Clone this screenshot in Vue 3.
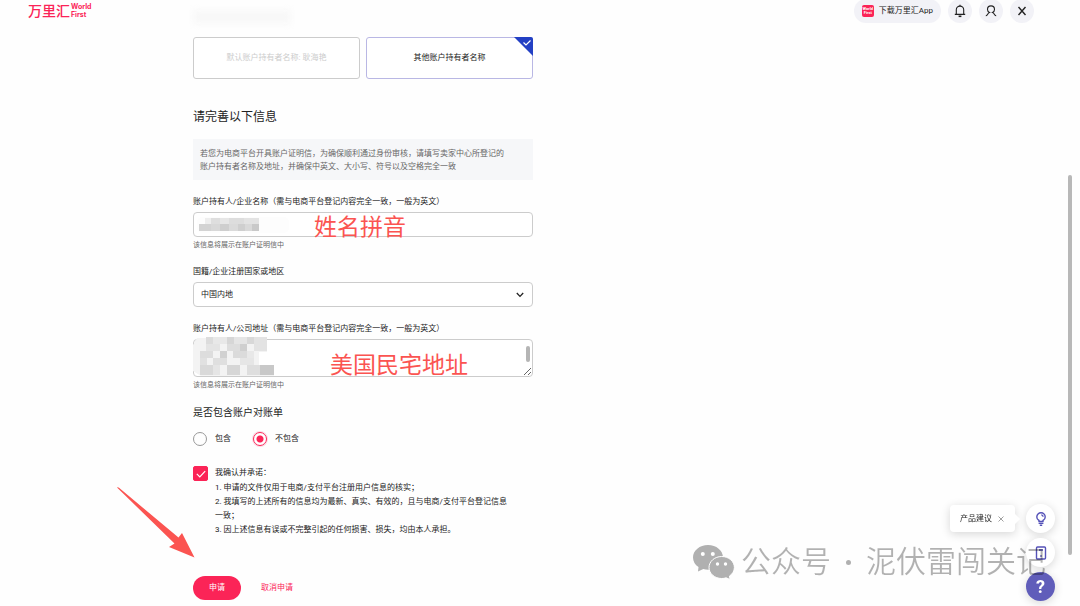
<template>
  <div class="page">
    <!-- Header -->
    <header class="header">
      <a class="logo" href="#">
        <span class="logo-cn">万里汇</span>
        <span class="logo-en">World<br />First</span>
      </a>
      <nav class="header-actions">
        <button class="app-button" type="button">
          <span class="app-icon">World<br />First</span>
          下载万里汇App
        </button>
        <button class="icon-button" type="button" aria-label="通知">
          <svg width="12" height="14" viewBox="0 0 12 14" fill="none" stroke="currentColor" stroke-width="1.1">
            <path d="M2.3 10.2V5.8a3.7 3.7 0 0 1 7.4 0v4.4M.8 10.4h10.4" />
            <path d="M4.6 12.3h2.8" stroke-width="1.6" />
            <path d="M6 .8v1.4" />
          </svg>
        </button>
        <button class="icon-button" type="button" aria-label="账户">
          <svg width="12" height="12" viewBox="0 0 12 12" fill="none" stroke="currentColor" stroke-width="1.1">
            <path d="M.8 10.800c1.800 0 1.500-2.600 3.700-3.300C3.200 6.800 2.500 5.700 2.500 4.400a3.500 3.500 0 0 1 7 0c0 1.300-.7 2.400-2 3.100 2.200.7 1.900 3.300 3.700 3.300" />
          </svg>
        </button>
        <button class="icon-button" type="button" aria-label="关闭">
          <svg width="10" height="10" viewBox="0 0 10 10" fill="none" stroke="currentColor" stroke-width="1.4">
            <path d="M1.500 1l7 8M8.500 1l-7 8" />
          </svg>
        </button>
      </nav>
    </header>

    <!-- Form -->
    <form class="form" @submit.prevent>
      <div class="masked-title"></div>

      <div class="holder-cards">
        <button class="holder-card disabled" type="button" disabled>默认账户持有者名称: 耿海艳</button>
        <button class="holder-card selected" type="button">
          其他账户持有者名称
          <svg class="corner" width="19" height="19" viewBox="0 0 19 19">
            <path d="M0 0h17a2 2 0 0 1 2 2v17z" fill="#2340c4" />
            <path d="M9.500 5.500l2.500 2.500 4.500-4.500" fill="none" stroke="#fff" stroke-width="1.200" />
          </svg>
        </button>
      </div>

      <h2 class="title">请完善以下信息</h2>
      <p class="notice">
        若您为电商平台开具账户证明信，为确保顺利通过身份审核，请填写卖家中心所登记的<br />
        账户持有者名称及地址，并确保中英文、大小写、符号以及空格完全一致
      </p>

      <div class="field">
        <label for="holder">账户持有人/企业名称（需与电商平台登记内容完全一致，一般为英文）</label>
        <div class="control">
          <input id="holder" v-model="holder" class="box" type="text" />
          <svg class="mosaic mosaic-name" width="92" height="18" viewBox="0 0 92 18">
            <rect x="0" y="1" width="92" height="16" rx="5" fill="#fdfdfd" />
            <rect v-for="(b, i) in nameBlocks" :key="i" :x="b[0]" :y="b[1]" :width="b[2]" :height="b[3]" :fill="b[4]" />
          </svg>
          <span class="mark mark-name">姓名拼音</span>
        </div>
        <p class="hint">该信息将展示在账户证明信中</p>
      </div>

      <div class="field">
        <label for="region">国籍/企业注册国家或地区</label>
        <div class="control">
          <select id="region" v-model="region" class="box select">
            <option value="CN">中国内地</option>
          </select>
          <svg class="chevron" width="8" height="6" viewBox="0 0 8 6" fill="none" stroke="#222" stroke-width="1.300">
            <path d="M.8 1L4 4.400 7.200 1" />
          </svg>
        </div>
      </div>

      <div class="field">
        <label for="address">账户持有人/公司地址（需与电商平台登记内容完全一致，一般为英文）</label>
        <div class="control">
          <textarea id="address" v-model="address" class="box textarea"></textarea>
          <svg class="mosaic mosaic-address" width="82" height="40" viewBox="0 0 82 40">
            <path d="M4 1h70v14h-8v13h15v11H8L0 34V8z" fill="#f3f3f3" />
            <rect v-for="(b, i) in addressBlocks" :key="i" :x="b[0]" :y="b[1]" :width="b[2]" :height="b[3]" :fill="b[4]" />
          </svg>
          <span class="thumb"></span>
          <span class="mark mark-address">美国民宅地址</span>
        </div>
        <p class="hint">该信息将展示在账户证明信中</p>
      </div>

      <fieldset class="statement">
        <legend>是否包含账户对账单</legend>
        <div class="radios">
          <label class="radio"><input v-model="statement" type="radio" name="statement" value="yes" />包含</label>
          <label class="radio"><input v-model="statement" type="radio" name="statement" value="no" />不包含</label>
        </div>
      </fieldset>

      <div class="agreement">
        <span class="check">
          <input id="agree" v-model="agreed" type="checkbox" />
          <svg v-if="agreed" width="10" height="8" viewBox="0 0 10 8" fill="none" stroke="#fff" stroke-width="1.200">
            <path d="M.8 3.800l3 3L9.200 1.200" />
          </svg>
        </span>
        <label class="terms" for="agree">
          <span class="terms-head">我确认并承诺：</span>
          <span>1. 申请的文件仅用于电商/支付平台注册用户信息的核实；</span>
          <span>2. 我填写的上述所有的信息均为最新、真实、有效的，且与电商/支付平台登记信息<br />一致；</span>
          <span>3. 因上述信息有误或不完整引起的任何损害、损失，均由本人承担。</span>
        </label>
      </div>

      <div class="actions">
        <button class="submit" type="submit">申请</button>
        <button class="cancel" type="button">取消申请</button>
      </div>
    </form>

    <!-- Arrow pointing at the submit button -->
    <svg class="arrow" width="78" height="71" viewBox="0 0 78 71">
      <path d="M0 .5Q1 0 2 .8L61.500 50.500 65 46 77.500 70.500 52 60 57.500 56.500z" fill="#fb5451" />
    </svg>

    <!-- Floating tools -->
    <aside class="tools">
      <div class="tool-row">
        <div class="tip">
          产品建议
          <button class="tip-close" type="button" aria-label="关闭">
            <svg width="6" height="6" viewBox="0 0 6 6" stroke="#888" stroke-width=".8">
              <path d="M.5.5l5 5M5.500.5l-5 5" />
            </svg>
          </button>
        </div>
        <button class="tool" type="button" aria-label="产品建议">
          <svg width="12" height="14" viewBox="0 0 12 14" fill="none" stroke="currentColor" stroke-width="1.400">
            <path d="M4 9.400V8.500C2.600 7.800 1.800 6.600 1.800 5a4.200 4.200 0 0 1 8.400 0c0 1.600-.8 2.800-2.200 3.500v.9z" />
            <path d="M6.200 2.900a2 2 0 0 1 1.900 1.900M3.600 11.300h4.800M4.800 13.200h2.400" />
          </svg>
        </button>
      </div>
      <button class="tool" type="button" aria-label="文档">
        <svg width="12" height="14" viewBox="0 0 12 14" fill="none" stroke="currentColor" stroke-width="1.400">
          <rect x="1.500" y="1" width="9" height="12" rx="1" />
          <path d="M4 4h4M5.200 10h1.600" />
        </svg>
      </button>
      <button class="tool help" type="button" aria-label="帮助">?</button>
    </aside>

    <!-- Watermark -->
    <div class="watermark">
      <svg width="42" height="36" viewBox="0 0 42 36">
        <path d="M15 1C6.700 1 0 6.500 0 13.500c0 4 2.100 7.300 5.500 9.600L5 27.500l5.300-2.500c1.500.4 3.100.7 4.700.7C23.300 25.700 30 20.500 30 13.500S23.300 1 15 1z" fill="#b0b0b0" />
        <path d="M28.700 12.500c-7 0-12.700 4.900-12.700 11s5.700 11 12.700 11c1.600 0 3-.2 4.400-.7L37 35.500l-.5-3.500c3-2 4.900-5 4.900-8.500 0-6.100-5.700-11-12.700-11z" fill="#b0b0b0" stroke="#fff" />
        <g fill="#fff">
          <circle cx="9.800" cy="10" r="2" />
          <circle cx="19.800" cy="10" r="2" />
          <circle cx="24.500" cy="20" r="1.700" />
          <circle cx="32.500" cy="20" r="1.700" />
        </g>
      </svg>
      <span>公众号</span>
      <span class="dot"></span>
      <span>泥伏雷闯关记</span>
    </div>

    <div class="scrollbar"></div>
  </div>
</template>

<script setup>
import { ref } from 'vue';

const holder = ref('');
const region = ref('CN');
const address = ref('');
const statement = ref('no');
const agreed = ref(true);

// x, y, width, height, fill
const nameBlocks = [
  [8, 2, 6, 6, '#eeeeee'],
  [14, 2, 9, 6, '#dedede'],
  [23, 2, 9, 6, '#e6e6e6'],
  [32, 2, 15, 6, '#dddddd'],
  [47, 2, 15, 6, '#e3e3e3'],
  [2, 8, 12, 7, '#d3d3d3'],
  [14, 8, 9, 7, '#d8d8d8'],
  [23, 8, 9, 7, '#cecece'],
  [32, 8, 9, 7, '#dadada'],
  [41, 8, 7, 7, '#cfcfcf'],
  [48, 8, 7, 7, '#d9d9d9'],
  [55, 8, 7, 7, '#c9c9c9']
];

const addressBlocks = [
  [13, 0, 7, 7, '#dcdcdc'],
  [20, 0, 14, 7, '#e8e8e8'],
  [34, 0, 7, 7, '#d6d6d6'],
  [41, 0, 13, 7, '#e5e5e5'],
  [54, 0, 7, 7, '#d8d8d8'],
  [61, 0, 13, 14, '#e3e3e3'],
  [13, 7, 14, 7, '#e4e4e4'],
  [34, 7, 13, 7, '#dddddd'],
  [47, 7, 7, 7, '#cfcfcf'],
  [7, 14, 13, 7, '#dddddd'],
  [27, 14, 7, 7, '#d1d1d1'],
  [40, 14, 14, 7, '#dbdbdb'],
  [54, 14, 7, 7, '#e8e8e8'],
  [7, 21, 7, 7, '#e1e1e1'],
  [20, 21, 14, 7, '#dfdfdf'],
  [47, 21, 14, 7, '#e6e6e6'],
  [7, 28, 13, 10, '#d9d9d9'],
  [20, 28, 7, 10, '#e5e5e5'],
  [34, 28, 13, 10, '#d6d6d6'],
  [54, 28, 13, 10, '#dedede'],
  [67, 28, 14, 10, '#c8c8c8']
];
</script>

<style>
body {
  background: #fefefe;
}
</style>

<style scoped>
.page {
  position: relative;
  min-height: 100vh;
  overflow: hidden;
  font-family: Roboto, "Noto Sans CJK SC", sans-serif;
  font-size: 8px;
  line-height: 12px;
  color: #222;
}

.page * {
  box-sizing: border-box;
}

button,
input,
select,
textarea {
  font: inherit;
  color: inherit;
}

button {
  padding: 0;
  border: 0;
  background: none;
  cursor: pointer;
}

.header {
  display: flex;
  align-items: center;
  justify-content: space-between;
  height: 22px;
  padding: 0 46px 0 28px;
}

.logo {
  display: flex;
  align-items: center;
  gap: 1px;
  color: #fb2457;
  text-decoration: none;
}

.logo-cn {
  font-size: 14px;
  font-weight: 500;
}

.logo-en {
  font-family: Inter, sans-serif;
  font-size: 7px;
  line-height: 8px;
  font-weight: 700;
}

.header-actions {
  display: flex;
  gap: 7px;
}

.app-button {
  display: flex;
  align-items: center;
  gap: 5px;
  height: 24px;
  padding: 0 8px;
  border-radius: 12px;
  background: #f2f2f7;
}

.app-icon {
  display: grid;
  place-items: center;
  width: 12px;
  height: 12px;
  border-radius: 2px;
  background: #fb2457;
  color: #fff;
  font-size: 4px;
  line-height: 4px;
  font-weight: 700;
}

.icon-button {
  display: grid;
  place-items: center;
  width: 24px;
  height: 24px;
  border-radius: 50%;
  background: #f2f2f7;
}

.form {
  max-width: 533px;
  padding-left: 193px;
}

.masked-title {
  width: 98px;
  height: 14px;
  margin-top: -12px;
  background: #f8f8f8;
  filter: blur(3px);
}

.holder-cards {
  display: grid;
  grid-template-columns: 1fr 1fr;
  gap: 6px;
  margin-top: 13px;
}

.holder-card {
  position: relative;
  height: 42px;
  border: 1px solid #ccc;
  border-radius: 3px;
  background: #fff;
}

.holder-card.disabled {
  color: #ccc;
}

.holder-card.selected {
  border-color: #b9b7e4;
}

.corner {
  position: absolute;
  top: -1px;
  right: -1px;
}

.title {
  margin: 29px 0 13px;
  font-size: 12px;
  line-height: 18px;
  font-weight: 400;
}

.notice {
  margin: 0;
  padding: 8px 7px 7px;
  background: #f6f7f9;
  color: #666;
  line-height: 13px;
}

.field {
  margin-top: 16px;
}

.field label {
  display: block;
}

.control {
  position: relative;
  margin-top: 4px;
}

.box {
  display: block;
  width: 100%;
  height: 25px;
  padding: 0 7px;
  border: 1px solid #ccc;
  border-radius: 4px;
  background: #fff;
  outline: none;
}

.select {
  appearance: none;
}

.textarea {
  height: 38px;
  resize: vertical;
}

.chevron {
  position: absolute;
  top: 10px;
  right: 9px;
}

.mosaic {
  position: absolute;
  pointer-events: none;
}

.mosaic-name {
  top: 4px;
  left: 4px;
}

.mosaic-address {
  top: -2px;
  left: 0;
}

.thumb {
  position: absolute;
  top: 7px;
  right: 3px;
  width: 4px;
  height: 16px;
  border-radius: 2px;
  background: #b5b5b5;
}

.mark {
  position: absolute;
  font-size: 23px;
  line-height: 24px;
  color: #fb5451;
  white-space: nowrap;
  pointer-events: none;
}

.mark-name {
  top: 4px;
  left: 121px;
}

.mark-address {
  top: 15px;
  left: 137px;
}

.hint {
  margin: 3px 0 0;
  font-size: 7px;
  line-height: 10px;
  color: #666;
}

.statement {
  margin: 16px 0 0;
  padding: 0;
  border: 0;
}

.statement legend {
  padding: 0;
  font-size: 10px;
  line-height: 14px;
}

.radios {
  display: flex;
  gap: 22px;
  margin-top: 12px;
}

.radio {
  display: flex;
  align-items: center;
  gap: 8px;
  height: 14px;
}

.radio input {
  appearance: none;
  width: 14px;
  height: 14px;
  margin: 0;
  border: 1px solid #999;
  border-radius: 50%;
}

.radio input:checked {
  border: 1px solid #fb2457;
  background: radial-gradient(circle, #fb2457 0 3px, #fff 4px);
  box-shadow: 0 0 0 1px #fbd9e4;
}

.agreement {
  display: flex;
  gap: 7px;
  margin-top: 20px;
}

.check {
  display: grid;
  place-items: center;
  width: 15px;
  height: 15px;
}

.check > * {
  grid-area: 1 / 1;
}

.check svg {
  pointer-events: none;
}

.check input {
  appearance: none;
  width: 15px;
  height: 15px;
  margin: 0;
  border: 1px solid #999;
  border-radius: 2px;
}

.check input:checked {
  border-color: #fb2457;
  background: #fb2457;
}

.terms {
  display: flex;
  flex-direction: column;
  line-height: 14px;
}

.terms-head {
  margin-bottom: 1px;
}

.actions {
  display: flex;
  gap: 20px;
  margin-top: 39px;
  padding-bottom: 5px;
}

.submit {
  width: 48px;
  height: 24px;
  border-radius: 12px;
  background: #fb2457;
  color: #fff;
}

.cancel {
  color: #fb2457;
}

.arrow {
  position: absolute;
  top: 487px;
  left: 117px;
  pointer-events: none;
}

.tools {
  position: fixed;
  right: 25px;
  bottom: 5px;
  display: flex;
  flex-direction: column;
  align-items: flex-end;
  gap: 5px;
}

.tool-row {
  display: flex;
  align-items: center;
  gap: 11px;
}

.tip {
  position: relative;
  display: flex;
  align-items: center;
  gap: 6px;
  height: 27px;
  padding: 0 11px 0 10px;
  border-radius: 4px;
  background: #fff;
  box-shadow: 0 2px 10px rgba(0, 0, 0, 0.16);
}

.tip::after {
  content: "";
  position: absolute;
  top: 9px;
  left: 100%;
  border: 5px solid transparent;
  border-left-color: #fff;
  border-right-width: 0;
}

.tip-close {
  display: flex;
}

.tool {
  display: grid;
  place-items: center;
  width: 29px;
  height: 29px;
  border-radius: 50%;
  background: #fff;
  box-shadow: 0 2px 10px rgba(0, 0, 0, 0.16);
  color: #5552b8;
}

.tool.help {
  background: #605dba;
  color: #fff;
  font-size: 18px;
  font-weight: 700;
}

.watermark {
  position: fixed;
  right: 34px;
  bottom: 26px;
  display: flex;
  align-items: center;
  font-size: 30px;
  line-height: 30px;
  font-weight: 350;
  color: rgba(0, 0, 0, 0.3);
  white-space: nowrap;
  pointer-events: none;
}

.watermark svg {
  margin-right: 6px;
}

.dot {
  width: 5px;
  height: 5px;
  margin: 0 15px;
  border-radius: 50%;
  background: #b0b0b0;
}

.scrollbar {
  position: fixed;
  top: 175px;
  right: 8px;
  bottom: 51px;
  width: 4px;
  border-radius: 2px;
  background: #b8b8b8;
}
</style>
